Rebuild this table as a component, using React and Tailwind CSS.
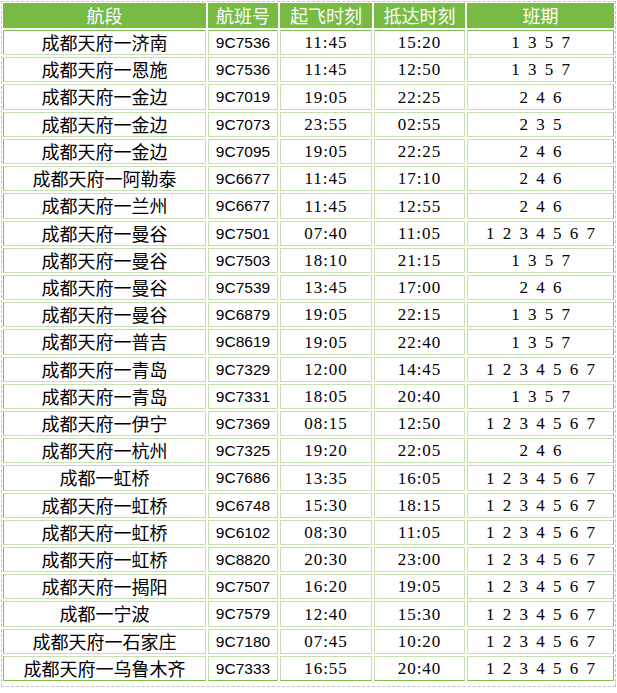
const rows = [
  ['成都天府一济南', '9C7536', '11:45', '15:20', '1 3 5 7'],
  ['成都天府一恩施', '9C7536', '11:45', '12:50', '1 3 5 7'],
  ['成都天府一金边', '9C7019', '19:05', '22:25', '2 4 6'],
  ['成都天府一金边', '9C7073', '23:55', '02:55', '2 3 5'],
  ['成都天府一金边', '9C7095', '19:05', '22:25', '2 4 6'],
  ['成都天府一阿勒泰', '9C6677', '11:45', '17:10', '2 4 6'],
  ['成都天府一兰州', '9C6677', '11:45', '12:55', '2 4 6'],
  ['成都天府一曼谷', '9C7501', '07:40', '11:05', '1 2 3 4 5 6 7'],
  ['成都天府一曼谷', '9C7503', '18:10', '21:15', '1 3 5 7'],
  ['成都天府一曼谷', '9C7539', '13:45', '17:00', '2 4 6'],
  ['成都天府一曼谷', '9C6879', '19:05', '22:15', '1 3 5 7'],
  ['成都天府一普吉', '9C8619', '19:05', '22:40', '1 3 5 7'],
  ['成都天府一青岛', '9C7329', '12:00', '14:45', '1 2 3 4 5 6 7'],
  ['成都天府一青岛', '9C7331', '18:05', '20:40', '1 3 5 7'],
  ['成都天府一伊宁', '9C7369', '08:15', '12:50', '1 2 3 4 5 6 7'],
  ['成都天府一杭州', '9C7325', '19:20', '22:05', '2 4 6'],
  ['成都一虹桥', '9C7686', '13:35', '16:05', '1 2 3 4 5 6 7'],
  ['成都天府一虹桥', '9C6748', '15:30', '18:15', '1 2 3 4 5 6 7'],
  ['成都天府一虹桥', '9C6102', '08:30', '11:05', '1 2 3 4 5 6 7'],
  ['成都天府一虹桥', '9C8820', '20:30', '23:00', '1 2 3 4 5 6 7'],
  ['成都天府一揭阳', '9C7507', '16:20', '19:05', '1 2 3 4 5 6 7'],
  ['成都一宁波', '9C7579', '12:40', '15:30', '1 2 3 4 5 6 7'],
  ['成都天府一石家庄', '9C7180', '07:45', '10:20', '1 2 3 4 5 6 7'],
  ['成都天府一乌鲁木齐', '9C7333', '16:55', '20:40', '1 2 3 4 5 6 7'],
];

const headers = ['航段', '航班号', '起飞时刻', '抵达时刻', '班期'];
const tallRows = [2, 6, 11, 16, 21];

const cjk = "font-['SimSun','Noto_Sans_CJK_SC',sans-serif]";
const serif = "font-['Liberation_Serif',serif]";
const sans = "font-['Liberation_Sans',sans-serif]";

const Cell = ({ children, first, last, top, bottom, className = '' }) => (
  <div
    className={`flex items-center justify-center border border-[#c4dfb0] text-black leading-none ${
      first ? 'border-l-[#7cc24c]' : ''
    } ${last ? 'border-r-[#7cc24c]' : ''} ${top ? 'border-t-[#7cc24c]' : ''} ${
      bottom ? 'border-b-[#7cc24c]' : ''
    } ${className}`}
  >
    {children}
  </div>
);

export default function App() {
  return (
    <div className="w-[617px] h-[693px] bg-white pt-px pl-px">
      <div className="w-[615px] h-[686px] border border-dashed border-[#c3c3c3] p-px">
        <div className="grid grid-cols-[203px_70px_92px_91px_147px] gap-x-[2px] bg-white">
          {headers.map((h) => (
            <div
              key={h}
              className={`h-[25px] flex items-center justify-center pb-[2px] bg-[#77bb45] text-white text-[18px] leading-none ${cjk}`}
            >
              {h}
            </div>
          ))}
        </div>
        <div className="mt-[2px] flex flex-col gap-y-[2px]">
          {rows.map((r, i) => {
            const top = i === 0;
            const bottom = i === rows.length - 1;
            const h = tallRows.includes(i) ? 'h-[26px]' : 'h-[25px]';
            return (
              <div key={i} className={`grid grid-cols-[203px_70px_92px_91px_147px] gap-x-[2px] ${h}`}>
                <Cell first top={top} bottom={bottom} className={`text-[18px] pb-[2px] ${cjk}`}>
                  {r[0]}
                </Cell>
                <Cell top={top} bottom={bottom} className={`text-[15.5px] ${sans}`}>
                  {r[1]}
                </Cell>
                <Cell top={top} bottom={bottom} className={`text-[17px] tracking-[1px] ${serif}`}>
                  {r[2]}
                </Cell>
                <Cell top={top} bottom={bottom} className={`text-[17px] tracking-[1px] ${serif}`}>
                  {r[3]}
                </Cell>
                <Cell last top={top} bottom={bottom} className={`text-[17px] whitespace-pre [word-spacing:4px] ${serif}`}>
                  {r[4]}
                </Cell>
              </div>
            );
          })}
        </div>
      </div>
    </div>
  );
}
